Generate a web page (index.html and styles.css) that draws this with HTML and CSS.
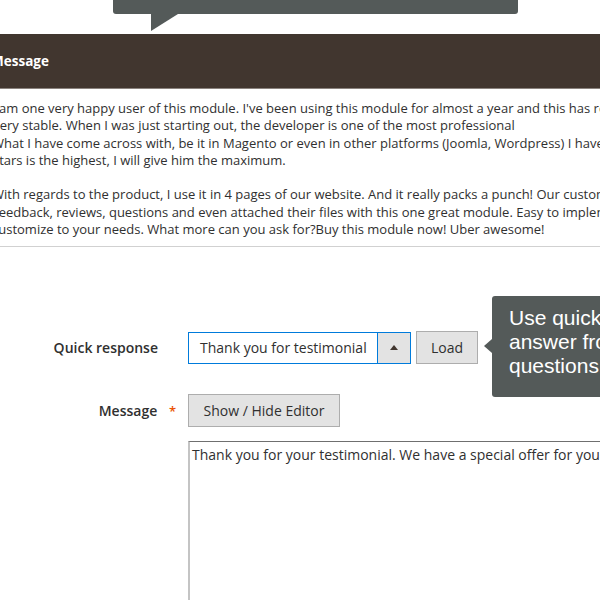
FILE: index.html
```html
<!DOCTYPE html>
<html>
<head>
<meta charset="utf-8">
<link rel="stylesheet" href="styles.css">
</head>
<body>
<div class="page">
  <div class="top-tip"></div>
  <div class="section-head"><span class="section-title">Message</span></div>
  <div class="message-body">
    <p>I am one very happy user of this module. I've been using this module for almost a year and this has really been<br>Very stable. When I was just starting out, the developer is one of the most professional<br>What I have come across with, be it in Magento or even in other platforms (Joomla, Wordpress) I have used<br>Stars is the highest, I will give him the maximum.</p>
    <p>With regards to the product, I use it in 4 pages of our website. And it really packs a punch! Our customers<br>Feedback, reviews, questions and even attached their files with this one great module. Easy to implement and<br>customize to your needs. What more can you ask for?Buy this module now! Uber awesome!</p>
  </div>
  <form class="reply-form">
    <div class="field field-quick">
      <label class="field-label">Quick response</label>
      <div class="field-control">
        <div class="select">
          <span class="select-value">Thank you for testimonial</span>
          <span class="select-arrow"><span class="tri"></span></span>
        </div>
        <button type="button" class="btn btn-load">Load</button>
        <div class="tooltip">
          <span class="tooltip-arrow"></span>
          <div class="tooltip-text">Use quick response to load<br>answer from frequently<br>questions list</div>
        </div>
      </div>
    </div>
    <div class="field field-message">
      <label class="field-label">Message <span class="required">*</span></label>
      <div class="field-control">
        <button type="button" class="btn btn-editor">Show / Hide Editor</button>
      </div>
    </div>
    <div class="field field-text">
      <div class="field-label"></div>
      <div class="field-control">
        <div class="textarea">Thank you for your testimonial. We have a special offer for you in our store</div>
      </div>
    </div>
  </form>
</div>
</body>
</html>
```
FILE: styles.css
```css
html, body {
  margin: 0;
  padding: 0;
  background: #ffffff;
  overflow: hidden;
  width: 600px;
  height: 600px;
}
.page {
  width: 760px;
  margin-left: -5px;
  font-family: "Open Sans", "Noto Sans", sans-serif;
  color: #303030;
}
.top-tip {
  position: relative;
  margin-left: 118px;
  width: 405px;
  height: 14px;
  background: #545a59;
  border-radius: 0 0 3px 3px;
}
.top-tip::after {
  content: "";
  position: absolute;
  left: 38px;
  top: 14px;
  width: 0;
  height: 0;
  border-top: 17px solid #545a59;
  border-right: 27px solid transparent;
}
.section-head {
  margin-top: 20px;
  height: 54px;
  background: #41362f;
  border-bottom: 1px solid #8a837e;
  display: flex;
  align-items: center;
}
.section-title {
  margin-left: -4px;
  color: #ffffff;
  font-weight: 700;
  font-size: 13.5px;
}
.message-body {
  padding: 11px 0 8px 0;
  border-bottom: 1px solid #d1d1d1;
  font-size: 13px;
  line-height: 17.3px;
}
.message-body p {
  margin: 0 0 0 -3px;
  white-space: nowrap;
}
.message-body p + p {
  margin-top: 17.3px;
}
.reply-form {
  padding-top: 84px;
  display: flex;
  flex-direction: column;
}
.field {
  display: flex;
  align-items: center;
}
.field-label {
  flex: none;
  text-align: right;
  font-size: 14px;
  font-weight: 600;
  color: #303030;
  padding-right: 30px;
  box-sizing: border-box;
  width: 193px;
}
.field-message .field-label {
  padding-right: 12px;
}
.required {
  color: #eb5202;
  font-size: 13px;
  margin-left: 8px;
}
.field-control {
  display: flex;
  align-items: center;
  position: relative;
}
.field-message {
  margin-top: 30px;
}
.field-text {
  margin-top: 14px;
  align-items: flex-start;
}
.select {
  display: flex;
  width: 223px;
  height: 32px;
  box-sizing: border-box;
  border: 1px solid #007bdb;
  background: #ffffff;
}
.select-value {
  flex: 1;
  padding-left: 11px;
  font-size: 14px;
  line-height: 30px;
  color: #303030;
  white-space: nowrap;
}
.select-arrow {
  width: 32px;
  background: #e3e3e3;
  border-left: 1px solid #007bdb;
  display: flex;
  align-items: center;
  justify-content: center;
}
.tri {
  width: 0;
  height: 0;
  border-left: 4px solid transparent;
  border-right: 4px solid transparent;
  border-bottom: 5px solid #41362f;
}
.btn {
  font-family: "Open Sans", "Noto Sans", sans-serif;
  font-size: 14px;
  color: #303030;
  background: #e3e3e3;
  border: 1px solid #adadad;
  border-radius: 0;
  height: 33px;
  box-sizing: border-box;
  padding: 0;
  margin: 0;
}
.btn-load {
  margin-left: 5px;
  width: 62px;
}
.btn-editor {
  width: 152px;
}
.tooltip {
  position: absolute;
  left: 304px;
  top: -35px;
  width: 300px;
  height: 101px;
  background: #545a59;
  border-radius: 3px;
  box-sizing: border-box;
  padding: 10px 0 0 17px;
}
.tooltip-arrow {
  position: absolute;
  left: -8px;
  top: 43px;
  width: 0;
  height: 0;
  border-top: 7px solid transparent;
  border-bottom: 7px solid transparent;
  border-right: 8px solid #545a59;
}
.tooltip-text {
  font-family: "Liberation Sans", Arial, sans-serif;
  font-size: 21px;
  line-height: 24px;
  color: #ffffff;
  white-space: nowrap;
}
.textarea {
  width: 460px;
  height: 200px;
  box-sizing: border-box;
  border-top: 1px solid #6f6f6f;
  border-left: 2px solid #c4c4c4;
  border-right: 1px solid #c4c4c4;
  padding: 3px 2px;
  font-size: 14px;
  line-height: 20px;
  color: #303030;
  white-space: nowrap;
}
```
